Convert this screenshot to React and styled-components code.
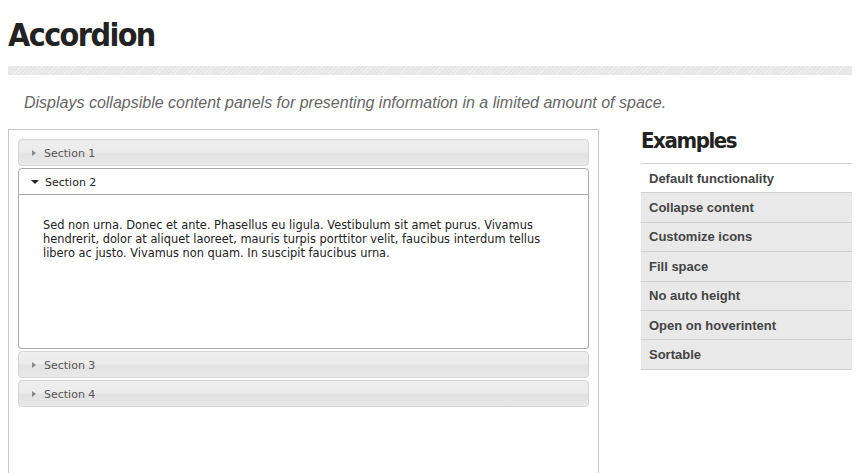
import React from "react";
import styled, { createGlobalStyle } from "styled-components";

const Global = createGlobalStyle`
  html, body { margin: 0; padding: 0; background: #fff; }
  body { font-family: "Liberation Sans", Arial, sans-serif; overflow: hidden; }
`;

const Page = styled.div`
  padding: 0 6px 0 8px;
  width: 858px;
  height: 473px;
  box-sizing: border-box;
  overflow: hidden;
`;

const Title = styled.h1`
  margin: 0;
  padding-top: 16px;
  height: 52px;
  box-sizing: border-box;
  font-family: "DejaVu Sans Condensed", "DejaVu Sans", sans-serif;
  font-weight: bold;
  font-size: 32px;
  letter-spacing: -1.6px;
  color: #222;
  line-height: 38px;
`;

const Stripe = styled.div`
  height: 9px;
  margin-top: 14px;
  background-color: #e6e6e6;
  background-image: repeating-linear-gradient(
    135deg,
    rgba(255, 255, 255, 0.35) 0 1px,
    rgba(0, 0, 0, 0) 1px 3px
  );
`;

const Lead = styled.p`
  margin: 18px 0 0 16px;
  font-family: "Liberation Sans", Arial, sans-serif;
  font-style: italic;
  font-size: 16px;
  line-height: 19px;
  color: #666;
`;

const Main = styled.div`
  display: flex;
  align-items: flex-start;
  margin-top: 17px;
`;

const Panel = styled.div`
  width: 591px;
  height: 360px;
  box-sizing: border-box;
  border: 1px solid #c8c8c8;
  padding: 9px 9px;
`;

const Header = styled.div`
  display: flex;
  align-items: center;
  height: 27px;
  box-sizing: border-box;
  margin-top: ${(p) => (p.$first ? "0" : "2px")};
  padding-left: 13px;
  padding-top: 1px;
  border: 1px solid ${(p) => (p.$active ? "#aaa" : "#d3d3d3")};
  border-radius: ${(p) => (p.$active ? "4px 4px 0 0" : "4px")};
  background: ${(p) =>
    p.$active
      ? "#fff"
      : "linear-gradient(to bottom, #eeeeee 0%, #ececec 45%, #e2e2e2 55%, #e9e9e9 100%)"};
  font-family: Verdana, "DejaVu Sans", sans-serif;
  font-size: 11px;
  color: ${(p) => (p.$active ? "#222" : "#555")};
`;

const Arrow = styled.span`
  display: inline-block;
  width: 0;
  height: 0;
  margin-right: 8px;
  ${(p) =>
    p.$open
      ? `border-left: 4px solid transparent; border-right: 4px solid transparent; border-top: 4px solid #222; margin-left: -1px; margin-right: 6px;`
      : `border-top: 3.5px solid transparent; border-bottom: 3.5px solid transparent; border-left: 4px solid #888;`}
`;

const Content = styled.div`
  height: 154px;
  box-sizing: border-box;
  border: 1px solid #aaa;
  border-top: 0;
  border-radius: 0 0 4px 4px;
  padding: 23px 42px 20px 24px;
  font-family: Verdana, "DejaVu Sans", sans-serif;
  font-size: 11.4px;
  line-height: 14px;
  color: #222;
`;

const Side = styled.div`
  width: 211px;
  margin-left: 42px;
`;

const SideTitle = styled.h2`
  margin: 0;
  height: 34px;
  font-family: "DejaVu Sans Condensed", "DejaVu Sans", sans-serif;
  font-weight: bold;
  font-size: 22px;
  letter-spacing: -1.4px;
  line-height: 24px;
  color: #222;
`;

const List = styled.ul`
  list-style: none;
  margin: 0;
  padding: 0;
  border-top: 1px solid #d0d0d0;
`;

const Item = styled.li`
  height: 29.4px;
  box-sizing: border-box;
  padding-left: 8px;
  display: flex;
  align-items: center;
  border-bottom: 1px solid #d0d0d0;
  background: ${(p) => (p.$active ? "#fff" : "#e9e9e9")};
  font-family: "Liberation Sans", Arial, sans-serif;
  font-weight: bold;
  font-size: 13px;
  color: #444;
`;

const sections = ["Section 1", "Section 2", "Section 3", "Section 4"];
const examples = [
  "Default functionality",
  "Collapse content",
  "Customize icons",
  "Fill space",
  "No auto height",
  "Open on hoverintent",
  "Sortable",
];

export default function App() {
  return (
    <Page>
      <Global />
      <Title>Accordion</Title>
      <Stripe />
      <Lead>
        Displays collapsible content panels for presenting information in a
        limited amount of space.
      </Lead>
      <Main>
        <Panel>
          {sections.map((s, i) => (
            <React.Fragment key={s}>
              <Header $first={i === 0} $active={i === 1}>
                <Arrow $open={i === 1} />
                {s}
              </Header>
              {i === 1 && (
                <Content>
                  Sed non urna. Donec et ante. Phasellus eu ligula. Vestibulum
                  sit amet purus. Vivamus hendrerit, dolor at aliquet laoreet,
                  mauris turpis porttitor velit, faucibus interdum tellus libero
                  ac justo. Vivamus non quam. In suscipit faucibus urna.
                </Content>
              )}
            </React.Fragment>
          ))}
        </Panel>
        <Side>
          <SideTitle>Examples</SideTitle>
          <List>
            {examples.map((e, i) => (
              <Item key={e} $active={i === 0}>
                {e}
              </Item>
            ))}
          </List>
        </Side>
      </Main>
    </Page>
  );
}
